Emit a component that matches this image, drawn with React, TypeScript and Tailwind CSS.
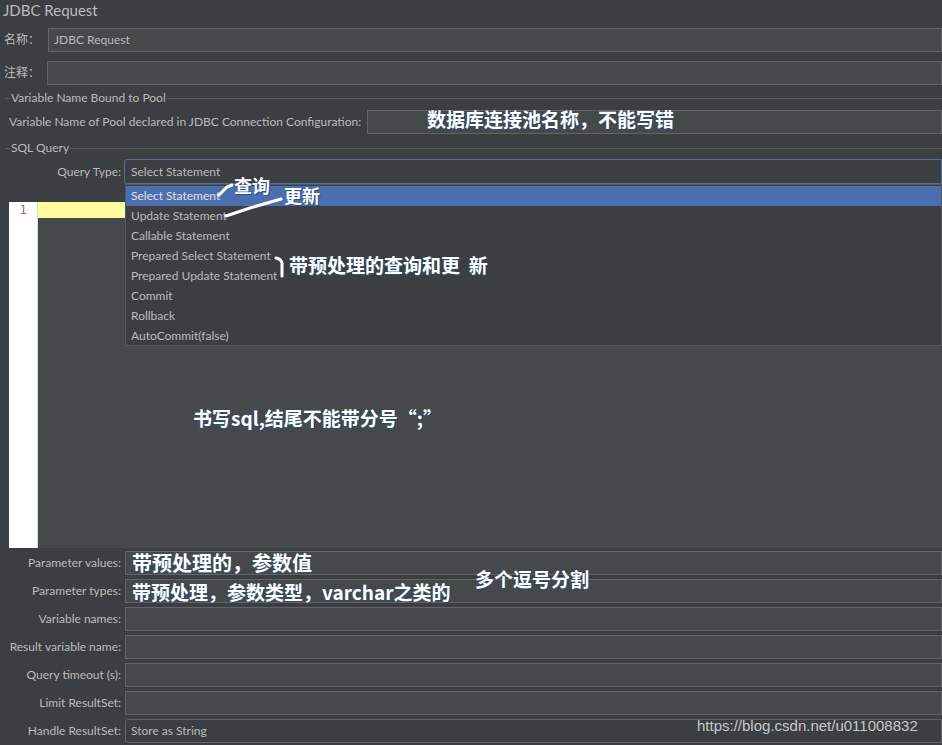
import React from 'react';

const uiFont = { fontFamily: 'Lato, "Noto Sans CJK SC", sans-serif' };
const noteFont = { fontFamily: '"Noto Sans CJK SC", "Noto Sans", sans-serif' };

const queryTypes = [
  'Select Statement',
  'Update Statement',
  'Callable Statement',
  'Prepared Select Statement',
  'Prepared Update Statement',
  'Commit',
  'Rollback',
  'AutoCommit(false)',
];

const bottomFields = [
  'Parameter values:',
  'Parameter types:',
  'Variable names:',
  'Result variable name:',
  'Query timeout (s):',
  'Limit ResultSet:',
];

function TextBox({ value, className = '' }: { value?: string; className?: string }) {
  return (
    <div
      className={`h-[24px] bg-[#45494a] border border-[#646464] flex items-center px-[5px] text-[12px] text-[#bbbbbb] ${className}`}
    >
      {value}
    </div>
  );
}

function GroupTitle({ title }: { title: string }) {
  return (
    <div className="h-[14px] flex items-center pl-[5px]">
      <div className="w-[5px] h-px bg-[#5b5e60]" />
      <span className="px-px text-[12px] text-[#bbbbbb] leading-[14px]">{title}</span>
      <div className="flex-1 h-px bg-[#5b5e60]" />
    </div>
  );
}

function Note({ children, className = '' }: { children: React.ReactNode; className?: string }) {
  return (
    <div
      className={`absolute font-bold text-white whitespace-nowrap leading-none [text-shadow:1px_1px_0_#2d4f7a] ${className}`}
      style={noteFont}
    >
      {children}
    </div>
  );
}

export default function App() {
  return (
    <div className="relative w-[942px] h-[745px] overflow-hidden bg-[#3c3f41] text-[#bbbbbb]" style={uiFont}>
      {/* title */}
      <div className="h-[20px] leading-[20px] pl-[3px] text-[15px] text-[#bbbbbb]">JDBC Request</div>

      {/* name + comment */}
      <div className="mt-[8px] flex items-center">
        <span className="w-[48px] pl-[4px] text-[12px]">名称：</span>
        <TextBox value="JDBC Request" className="flex-1" />
      </div>
      <div className="mt-[9px] flex items-center">
        <span className="w-[47px] pl-[4px] text-[12px]">注释：</span>
        <TextBox className="flex-1" />
      </div>

      {/* pool */}
      <div className="mt-[6px]">
        <GroupTitle title="Variable Name Bound to Pool" />
      </div>
      <div className="mt-[5px] flex items-center">
        <span className="w-[367px] pl-[9px] text-[12px] whitespace-nowrap">
          Variable Name of Pool declared in JDBC Connection Configuration:
        </span>
        <TextBox className="flex-1" />
      </div>

      {/* sql query */}
      <div className="mt-[7px]">
        <GroupTitle title="SQL Query" />
      </div>
      <div className="mt-[4px] flex items-center">
        <span className="w-[121px] text-right text-[12px]">Query Type:</span>
        <div className="ml-[3px] flex-1 h-[25px] border border-[#4a6f9c] rounded-l-[3px] bg-[#3c3f41] flex items-center px-[6px] text-[12px]">
          Select Statement
        </div>
      </div>

      {/* editor */}
      <div className="mt-[18px] h-[346px] flex">
        <div className="ml-[9px] w-[29px] bg-white border-r border-[#d9d9d9] flex justify-center">
          <span className="h-[16px] leading-[16px] text-[12px] text-[#9c6b56]" style={{ fontFamily: '"DejaVu Sans Mono", monospace' }}>
            1
          </span>
        </div>
        <div className="flex-1 bg-[#45494a]">
          <div className="h-[16px] bg-[#fdfd9f]" />
        </div>
      </div>

      {/* bottom fields */}
      <div className="mt-[3px] flex flex-col gap-[4px]">
        {bottomFields.map(label => (
          <div key={label} className="flex items-center">
            <span className="w-[121px] text-right text-[12px] whitespace-nowrap">{label}</span>
            <TextBox className="ml-[4px] flex-1" />
          </div>
        ))}
        <div className="flex items-center">
          <span className="w-[121px] text-right text-[12px]">Handle ResultSet:</span>
          <div className="ml-[4px] flex-1 h-[24px] border border-[#646464] rounded-l-[3px] bg-[#3c3f41] flex items-center px-[5px] text-[12px]">
            Store as String
          </div>
        </div>
      </div>

      {/* query type popup */}
      <div className="absolute left-[125px] top-[184px] w-[817px] h-[162px] bg-[#3c3f41] border border-[#555758] py-px">
        {queryTypes.map((q, i) => (
          <div
            key={q}
            className={`h-[20px] leading-[20px] px-[5px] text-[12px] ${i === 0 ? 'bg-[#4b6eaf] text-[#e0e0e0]' : 'text-[#bbbbbb]'}`}
          >
            {q}
          </div>
        ))}
      </div>

      {/* strokes */}
      <svg className="absolute left-0 top-0 pointer-events-none" width="942" height="745">
        <g stroke="white" strokeWidth="3" strokeLinecap="round" fill="none">
          <path d="M219 195 L227 187 L232 185" />
          <path d="M226 216 L250 208 L281 199" />
          <path d="M276 258 Q281 259 282 263 L282 276" />
        </g>
      </svg>

      {/* annotations */}
      <Note className="left-[427px] top-[109px] text-[19px]">数据库连接池名称，不能写错</Note>
      <Note className="left-[234px] top-[176px] text-[18px]">查询</Note>
      <Note className="left-[284px] top-[186px] text-[18px]">更新</Note>
      <Note className="left-[289px] top-[255px] text-[19px]">带预处理的查询和更&nbsp;&nbsp;新</Note>
      <Note className="left-[193px] top-[408px] text-[19px]">书写sql,结尾不能带分号“;”</Note>
      <Note className="left-[132px] top-[553px] text-[20px]">带预处理的，参数值</Note>
      <Note className="left-[132px] top-[582px] text-[19px]">带预处理，参数类型，varchar之类的</Note>
      <Note className="left-[475px] top-[569px] text-[19px]">多个逗号分割</Note>

      <div
        className="absolute left-[697px] top-[717px] text-[15px] leading-[18px] text-[#c8c8c8] whitespace-nowrap"
        style={{ fontFamily: '"Liberation Sans", Arial, sans-serif' }}
      >
        https://blog.csdn.net/u011008832
      </div>
    </div>
  );
}
